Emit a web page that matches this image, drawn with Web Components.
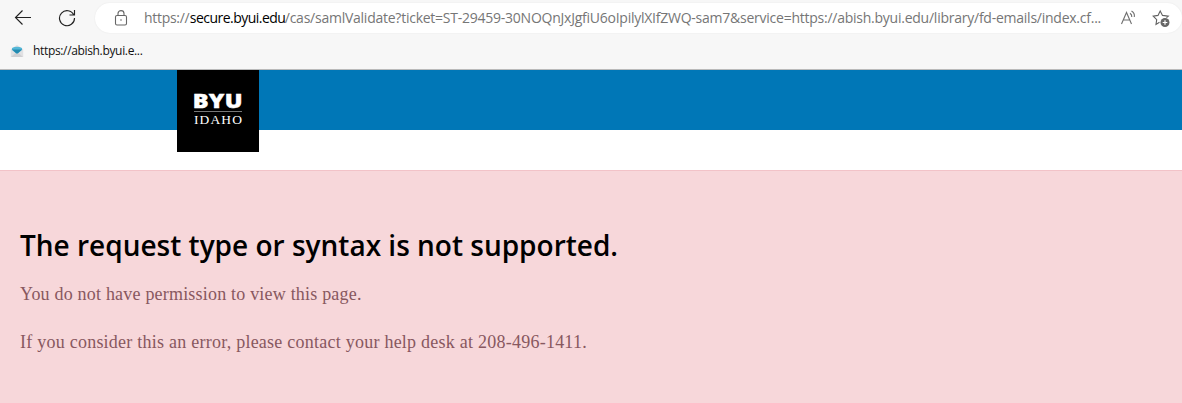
<!DOCTYPE html>
<html lang="en">
<head>
<meta charset="utf-8">
<title>The request type or syntax is not supported.</title>
<style>
body{margin:0;background:#fff;overflow:hidden}
</style>
</head>
<body>
<app-window></app-window>
<script>
const define=(name,html)=>customElements.define(name,class extends HTMLElement{
  constructor(){super();this.attachShadow({mode:'open'}).innerHTML=html;}
});

define('address-bar',`<style>
:host{display:flex;align-items:center;box-sizing:border-box;flex:1;height:30px;background:#fff;border-radius:15px;padding:0 7px 0 17px;box-shadow:0 0 2px rgba(0,0,0,.07);font:14px/30px "Open Sans",sans-serif;color:#767676;white-space:nowrap}
svg{display:block;flex:none}
.url{display:flex;width:957px;margin:0 19px 0 14px}
.scheme{width:46px;letter-spacing:-.3px}
.host{width:95px;color:#000;letter-spacing:-.52px}
.path{letter-spacing:-.245px}
.read{margin-right:14px}
</style>
<svg width="18" height="18" viewBox="0 0 18 18" fill="none" stroke="#666" stroke-width="1.1"><rect x="3.500" y="6.500" width="11" height="9.500" rx="1.500"/><path d="M6 6.500V4.500C6 .7 12 .7 12 4.500V6.500"/><circle cx="9" cy="11" r=".8" fill="#666" stroke="none"/></svg>
<div class="url"><span class="scheme">https://</span><span class="host">secure.byui.edu</span><span class="path">/cas/samlValidate?ticket=ST-29459-30NOQnJxJgfiU6oIpilylXIfZWQ-sam7&amp;service=https://abish.byui.edu/library/fd-emails/index.cf...</span></div>
<svg class="read" width="18" height="18" viewBox="0 0 18 18" fill="none" stroke="#707070" stroke-width="1.1"><path d="M1.500 15 6.500 3.500 11.500 15M3.300 11H9.700M10 4.200Q12 5.500 11.800 8M11.500 2Q15 4.200 14.300 8"/></svg>
<svg width="18" height="18" viewBox="0 0 18 18" fill="none" stroke="#606060" stroke-width="1.1"><path d="M7.500 13.200 4 15.400 4.700 10.700 1.200 7.100 6 6.400 8.200 2 10.500 6.400 16.300 7.200 14.500 8.700"/><circle cx="13" cy="13.500" r="4.500" fill="#666" stroke="none"/><path d="M13 11.200V15.800M10.700 13.500H15.300" stroke="#fff" stroke-width="1.2"/></svg>`);

define('browser-toolbar',`<style>
:host{display:flex;align-items:center;height:36px;padding:0 0 0 14px}
svg{display:block;flex:none}
.back{margin-right:26px}
.reload{margin-right:19px}
</style>
<svg class="back" width="18" height="18" viewBox="0 0 18 18" fill="none" stroke="#222" stroke-width="1.15"><path d="M17 8.500H1.500M8.500 1.500 1.500 8.500 8.500 15.500"/></svg>
<svg class="reload" width="18" height="18" viewBox="0 0 18 18" fill="none" stroke="#222" stroke-width="1.15"><path d="M15.800 6A7.500 7.500 0 1 0 16.500 9M16.500 1V6H11.500"/></svg>
<address-bar></address-bar>`);

define('favorites-bar',`<style>
:host{display:flex;align-items:center;height:30px;padding-left:10px;font:12px/16px "Open Sans",sans-serif;color:#111}
svg{display:block;margin-right:9px}
span{letter-spacing:-.34px}
</style>
<svg width="14" height="14" viewBox="0 0 14 14"><path d="M.8 5.200 7 1 13.200 5.200V13H.8Z" fill="#e1e1e3"/><path d="M2 4Q7 1.600 12 4V6L7 10 2 6Z" fill="#55b8d8"/><path d="M2 5.500H12L7 10Z" fill="#248bb0"/><path d="M1 13 5.500 9 7 10 8.500 9 13 13Z" fill="#cfcfd2"/></svg>
<span>https://abish.byui.e...</span>`);

define('browser-chrome',`<style>
:host{display:block;box-sizing:border-box;height:70px;background:#f7f7f7;border-bottom:1px solid #bababa}
</style><browser-toolbar></browser-toolbar><favorites-bar></favorites-bar>`);

define('campus-logo',`<style>
:host{display:flex;flex-direction:column;align-items:center;box-sizing:border-box;width:82px;height:82px;padding-top:22px;background:#000;color:#fff;white-space:nowrap}
.top{font:800 18.500px/17px "Open Sans",sans-serif;letter-spacing:.3px;height:19px;-webkit-text-stroke:.4px #fff;transform:scaleX(1.27)}
.rule{width:48px;height:1px;background:#777}
.bottom{font:13.500px/15px "Liberation Serif",serif;letter-spacing:1.1px;margin-left:1px}
</style><div class="top">BYU</div><div class="rule"></div><div class="bottom">IDAHO</div>`);

define('site-header',`<style>
:host{display:block;height:100px;background:linear-gradient(#0077b7 60px,#fff 60px);padding-left:177px}
</style><campus-logo></campus-logo>`);

define('error-notice',`<style>
:host{display:block;box-sizing:border-box;height:233px;padding:56px 20px 0;background:#f7d7da;border-top:1px solid #f2c3c8}
h1{margin:0;font:600 28px/36px "Open Sans",sans-serif;color:#000;white-space:nowrap}
p{margin:0;font:18px/24px "Liberation Serif",serif;color:#88585f;white-space:nowrap}
.a{margin-top:19px;letter-spacing:.2px}
.b{margin-top:24px;letter-spacing:.24px}
</style>
<h1>The request type or syntax is not supported.</h1>
<p class="a">You do not have permission to view this page.</p>
<p class="b">If you consider this an error, please contact your help desk at 208-496-1411.</p>`);

define('app-window',`<style>:host{display:block;height:403px;overflow:hidden}</style>
<browser-chrome></browser-chrome><site-header></site-header><error-notice></error-notice>`);
</script>
</body>
</html>
